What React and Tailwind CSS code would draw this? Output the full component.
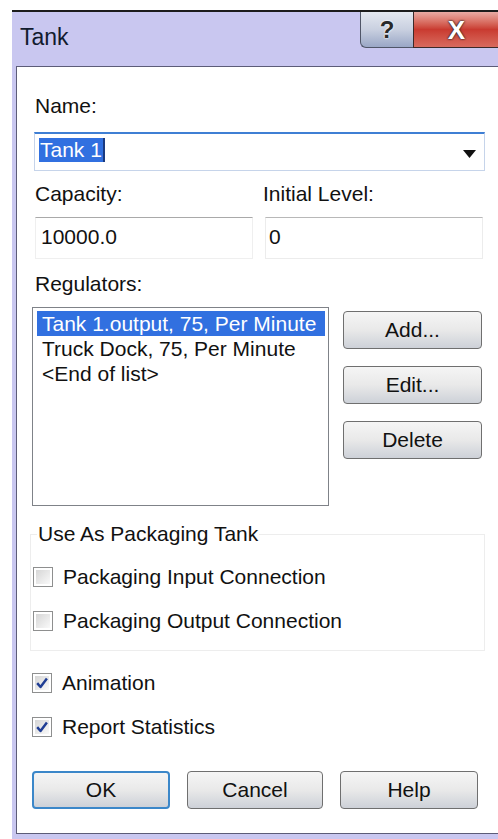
import React from "react";

const FONT = "font-['Liberation_Sans',Arial,sans-serif]";

function CheckBox({ checked }) {
  return (
    <div className="w-[20px] h-[20px] border border-[#8e8f8f] bg-white p-[2px] shrink-0">
      <div className="w-full h-full bg-gradient-to-br from-[#d6d6d6] to-[#f9f9f9] relative">
        {checked && (
          <svg viewBox="0 0 16 16" className="absolute inset-0 w-full h-full">
            <path d="M2.5 8.2 L6.3 12.6 L13.6 2.8" fill="none" stroke="#1f3d94" strokeWidth="2.8" strokeLinejoin="round" />
          </svg>
        )}
      </div>
    </div>
  );
}

function CheckRow({ label, checked, className = "" }) {
  return (
    <div className={`flex items-center h-[28px] ${className}`}>
      <CheckBox checked={checked} />
      <span className="ml-[10px] leading-[28px] text-[21px] text-[#111] whitespace-nowrap">{label}</span>
    </div>
  );
}

function Button({ children, primary, className = "" }) {
  return (
    <div
      className={`h-[38px] rounded-[4px] flex items-center justify-center text-[21px] text-[#111] bg-gradient-to-b from-[#f5f5f5] via-[#e9e9e9] to-[#cdd1d8] ${
        primary ? "border-2 border-[#3b87c9]" : "border border-[#6f6f6f]"
      } ${className}`}
    >
      {children}
    </div>
  );
}

export default function App() {
  return (
    <div className={`w-[498px] h-[839px] overflow-hidden bg-white ${FONT}`}>
      {/* window frame */}
      <div className="mt-[10px] ml-[12px] w-[496px] h-[829px] border-t-2 border-[#1c1c1c] bg-[#c9c7f0] flex flex-col">
        {/* caption */}
        <div className="h-[54px] flex items-start shrink-0">
          <div className="pl-[8px] pt-[10px] text-[23px] leading-[30px] text-[#121b2e]">Tank</div>
          <div className="flex-1" />
          <div className="flex mr-[9px]">
            <div className="w-[53px] h-[36px] rounded-bl-[6px] border-l border-b border-[#505668] bg-gradient-to-b from-[#e4e8f0] via-[#c9d0e0] to-[#9aa7c6] flex items-center justify-center">
              <span className="font-bold text-[24px] leading-none text-[#2a2a2a] [text-shadow:0_0_2px_#fff,0_0_2px_#fff]">?</span>
            </div>
            <div className="w-[86px] h-[36px] border-l border-b border-[#3c2a2a] bg-gradient-to-b from-[#e8aaa4] via-[#c93a30] to-[#d86a5e] flex items-center justify-center">
              <span className="font-bold text-[26px] leading-none text-white [text-shadow:0_0_2px_#222,0_0_2px_#222]">X</span>
            </div>
          </div>
        </div>

        {/* client area */}
        <div className="flex-1 ml-[4px] mb-[5px] border-l border-t border-b border-[#5c5c78] bg-white pl-[15px] text-[21px] leading-[28px] text-[#111] whitespace-nowrap">
          <div className="mt-[25px] ml-[3px]">Name:</div>

          {/* name combo */}
          <div className="mt-[12px] ml-[2px] w-[451px] h-[39px] border-t-2 border-[#3f7fd4] border-x border-b border-x-[#c6d4ea] border-b-[#c6d4ea] flex items-start pt-[4px] pl-[4px] pr-[8px]">
            <span className="h-[24px] leading-[24px] px-[1px] bg-[#3170e0] text-white border-r-2 border-[#1a3a80]">Tank 1</span>
            <div className="flex-1" />
            <svg width="13" height="8" viewBox="0 0 13 8" className="mt-[12px]">
              <path d="M0 0 H13 L6.5 8 Z" fill="#111" />
            </svg>
          </div>

          {/* capacity / initial level */}
          <div className="mt-[9px] grid grid-cols-[231px_222px]">
            <div className="ml-[3px]">Capacity:</div>
            <div>Initial Level:</div>
            <div className="mt-[9px] ml-[3px] w-[218px] h-[42px] border-t border-t-[#a9a9a9] border-x border-b border-x-[#efefef] border-b-[#efefef] pl-[5px] pt-[5px]">10000.0</div>
            <div className="mt-[9px] ml-[2px] w-[218px] h-[42px] border-t border-t-[#b8b8b8] border-x border-b border-x-[#ececec] border-b-[#ececec] pl-[3px] pt-[5px]">0</div>
          </div>

          <div className="mt-[11px] ml-[3px]">Regulators:</div>

          {/* regulators list and its buttons */}
          <div className="mt-[9px] flex items-start">
            <div className="w-[297px] h-[199px] border border-[#7f8288] pt-[3px] pl-[4px] pr-[3px] leading-[25px]">
              <div className="h-[25px] pl-[5px] bg-[#3170e0] text-white">Tank 1.output, 75, Per Minute</div>
              <div className="h-[25px] pl-[5px]">Truck Dock, 75, Per Minute</div>
              <div className="h-[25px] pl-[5px]">&lt;End of list&gt;</div>
            </div>
            <div className="ml-[14px] mt-[4px] flex flex-col gap-[17px]">
              <Button className="w-[139px]">Add...</Button>
              <Button className="w-[139px]">Edit...</Button>
              <Button className="w-[139px]">Delete</Button>
            </div>
          </div>

          {/* packaging group */}
          <fieldset className="mt-[14px] -ml-[2px] w-[455px] border border-[#ededed] pl-[2px] pb-[15px]">
            <legend className="ml-[4px] px-[1px]">Use As Packaging Tank</legend>
            <CheckRow className="mt-[15px]" label="Packaging Input Connection" />
            <CheckRow className="mt-[16px]" label="Packaging Output Connection" />
          </fieldset>

          <CheckRow className="mt-[18px]" label="Animation" checked />
          <CheckRow className="mt-[16px]" label="Report Statistics" checked />

          {/* dialog buttons */}
          <div className="mt-[30px] flex gap-[17px]">
            <Button primary className="w-[138px]">OK</Button>
            <Button className="w-[136px]">Cancel</Button>
            <Button className="w-[138px]">Help</Button>
          </div>
        </div>
      </div>
    </div>
  );
}
